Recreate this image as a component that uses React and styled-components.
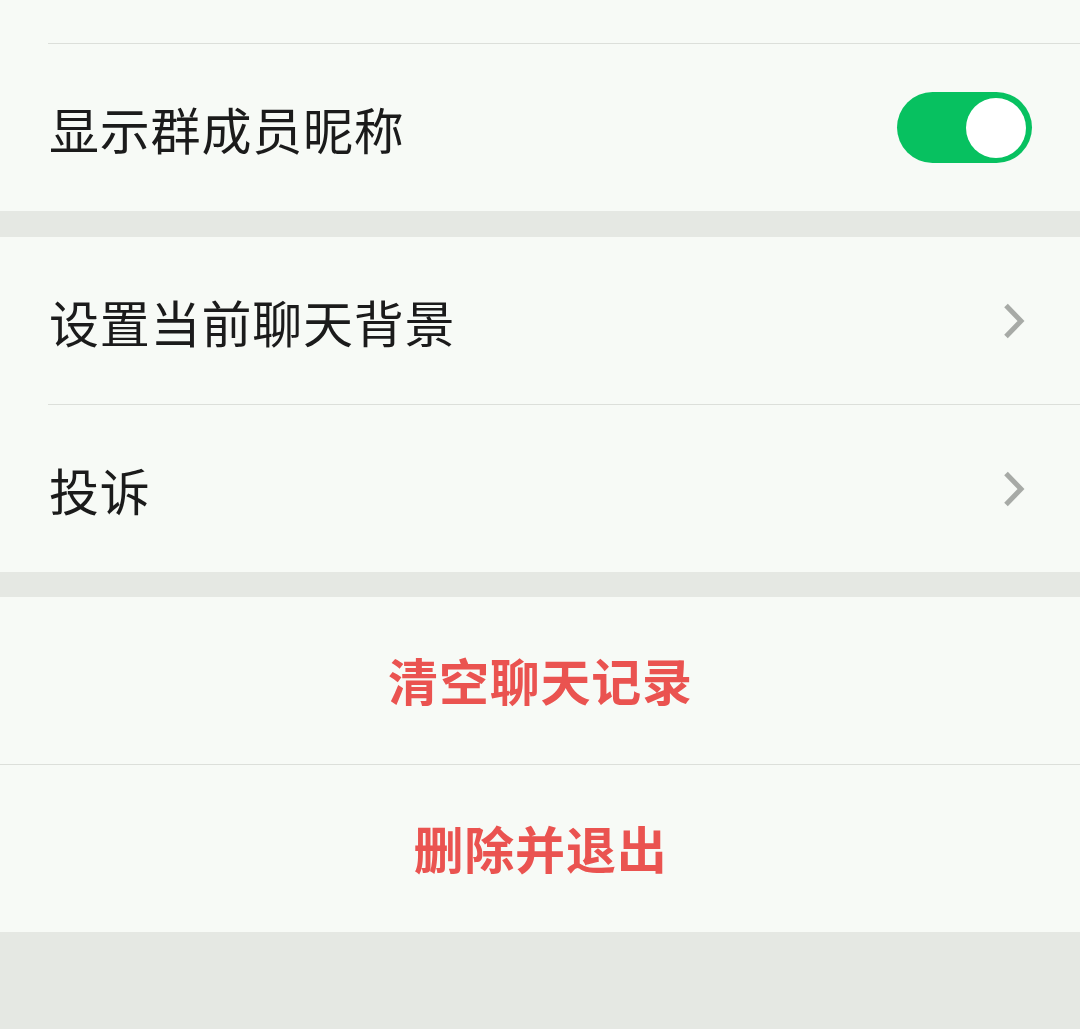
import React from "react";
import styled, { createGlobalStyle } from "styled-components";

const Global = createGlobalStyle`
  html, body {
    margin: 0;
    padding: 0;
    background: #e5e8e3;
  }
  body {
    font-family: "Noto Sans CJK SC", "Noto Sans", sans-serif;
  }
`;

const Page = styled.div`
  min-height: 100vh;
  background: #e5e8e3;
  display: flex;
  flex-direction: column;
`;

const Group = styled.section`
  background: #f7faf6;
  display: flex;
  flex-direction: column;
  margin-bottom: ${(p) => p.$gap || 0}px;
`;

const Cell = styled.div`
  height: ${(p) => p.$h || 167}px;
  box-sizing: border-box;
  padding: 0 48px 0 49px;
  display: flex;
  align-items: center;
  justify-content: ${(p) => (p.$center ? "center" : "space-between")};
`;

const Divider = styled.div`
  height: 1px;
  margin-left: ${(p) => p.$inset || 0}px;
  background: #dcdfda;
`;

const Label = styled.span`
  font-size: 50px;
  line-height: 1;
  color: #1b1b1b;
  letter-spacing: 0.8px;
  padding-top: 0;
`;

const Action = styled.span`
  font-size: 50px;
  line-height: 1;
  font-weight: 700;
  color: #ea5350;
  letter-spacing: 0.8px;
  margin-top: -4px;
`;

const SwitchTrack = styled.div`
  width: 135px;
  height: 71px;
  border-radius: 36px;
  background: ${(p) => (p.$on ? "#07c160" : "#d6d9d5")};
  display: flex;
  align-items: center;
  justify-content: ${(p) => (p.$on ? "flex-end" : "flex-start")};
  padding: 0 6px;
  box-sizing: border-box;
`;

const SwitchKnob = styled.div`
  width: 60px;
  height: 60px;
  border-radius: 50%;
  background: #ffffff;
`;

const ChevronSvg = styled.svg`
  width: 28px;
  height: 44px;
  margin-right: 4px;
  flex: none;
`;

const Chevron = () => (
  <ChevronSvg viewBox="0 0 28 44">
    <path
      d="M6 6.5 L21 22 L6 37.5"
      fill="none"
      stroke="#a7aaa6"
      strokeWidth="5"
      strokeLinecap="butt"
      strokeLinejoin="miter"
    />
  </ChevronSvg>
);

export default function App() {
  return (
    <Page>
      <Global />
      <Group $gap={26}>
        <Cell $h={43} />
        <Divider $inset={48} />
        <Cell>
          <Label>显示群成员昵称</Label>
          <SwitchTrack $on>
            <SwitchKnob />
          </SwitchTrack>
        </Cell>
      </Group>
      <Group $gap={25}>
        <Cell>
          <Label>设置当前聊天背景</Label>
          <Chevron />
        </Cell>
        <Divider $inset={48} />
        <Cell>
          <Label>投诉</Label>
          <Chevron />
        </Cell>
      </Group>
      <Group>
        <Cell $center>
          <Action>清空聊天记录</Action>
        </Cell>
        <Divider />
        <Cell $center>
          <Action>删除并退出</Action>
        </Cell>
      </Group>
    </Page>
  );
}
